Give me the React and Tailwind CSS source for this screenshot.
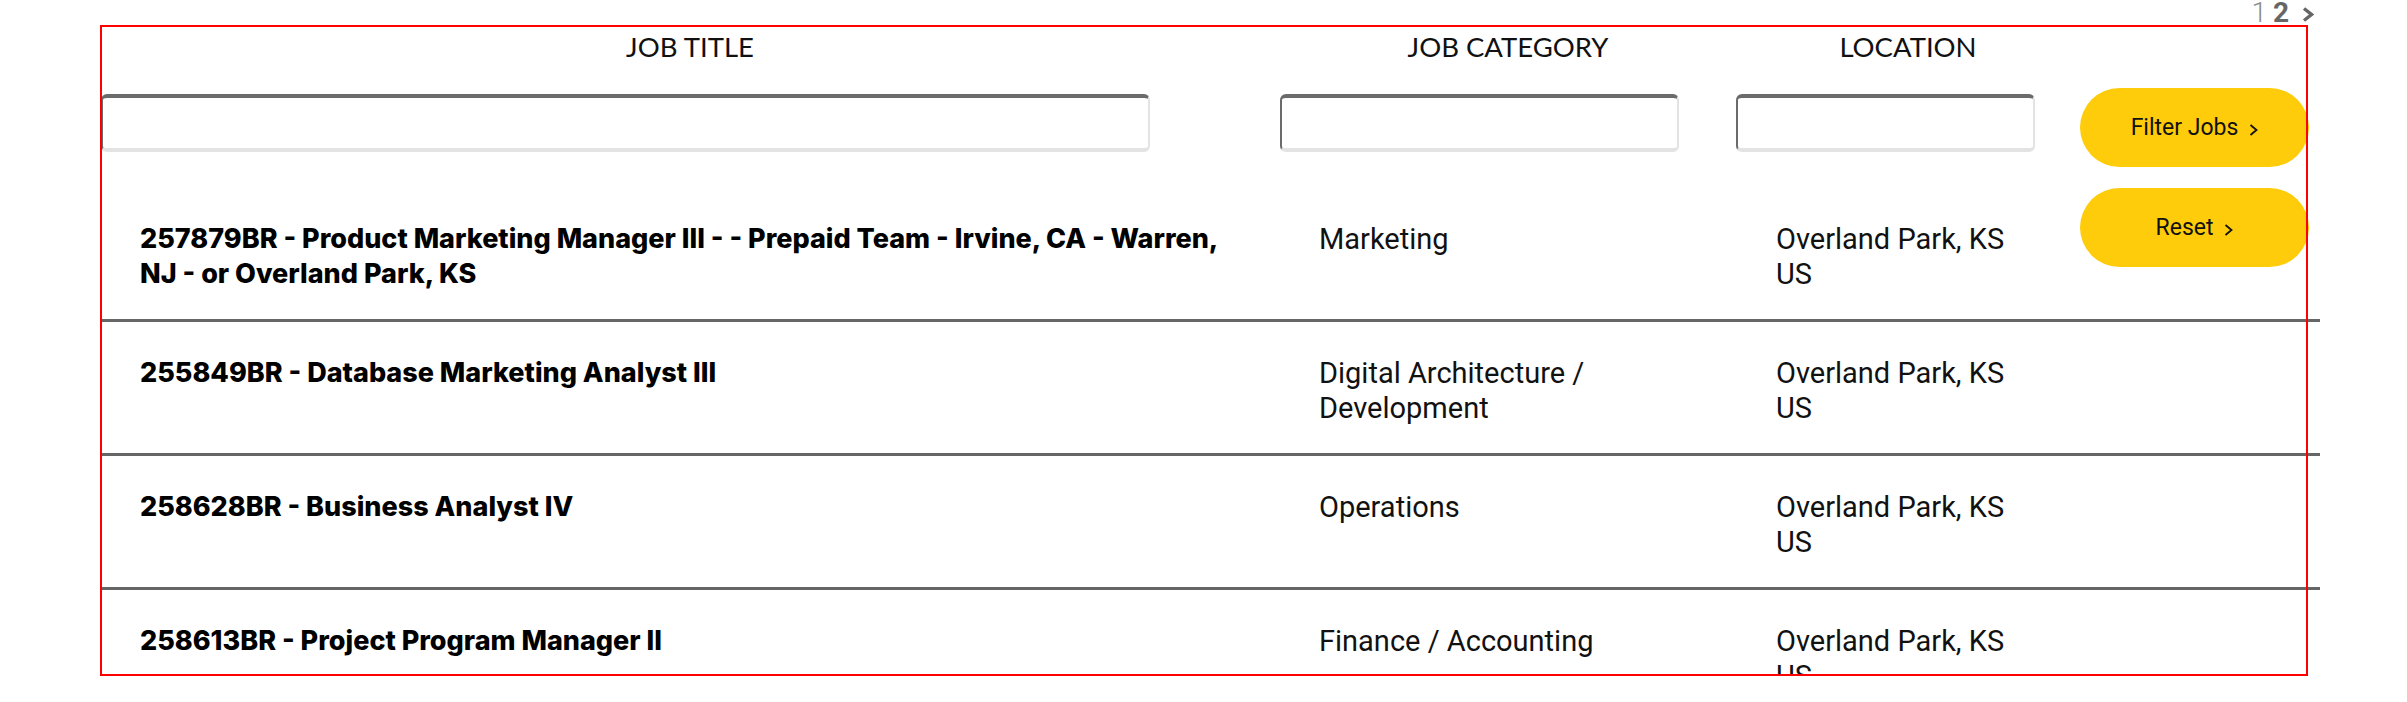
import { Fragment } from "react";

const jobs = [
  {
    title: "257879BR - Product Marketing Manager III - - Prepaid Team - Irvine, CA - Warren, NJ - or Overland Park, KS",
    category: "Marketing",
  },
  { title: "255849BR - Database Marketing Analyst III", category: "Digital Architecture / Development" },
  { title: "258628BR - Business Analyst IV", category: "Operations" },
  { title: "258613BR - Project Program Manager II", category: "Finance / Accounting" },
];

const bold = { fontFamily: "Inter, 'Liberation Sans', sans-serif" };
const regular = { fontFamily: "Roboto, 'Liberation Sans', sans-serif" };
const label = { fontFamily: "Lato, 'Liberation Sans', sans-serif" };

function Chevron({ className = "" }) {
  return (
    <svg width="9" height="12" viewBox="0 0 9 12" className={className} fill="none">
      <polyline points="1.5,1 7.5,6 1.5,11" stroke="#111" strokeWidth="1.8" />
    </svg>
  );
}

function YellowButton({ children }) {
  return (
    <button
      type="button"
      className="flex h-[79px] w-[229px] items-center justify-center gap-[11px] rounded-full bg-[#fecc0a] pt-[2px] text-[23px] text-[#111]"
      style={regular}
    >
      <span>{children}</span>
      <Chevron className="mt-[2px]" />
    </button>
  );
}

function FieldInput({ width }) {
  return (
    <input
      type="text"
      className={[
        "mt-[6px] h-[58px] rounded-[6px] border-t-4 border-r-2 border-b-4 border-l-2 border-t-[#6b6b6b] border-l-[#6b6b6b] border-r-[#e3e3e3] border-b-[#e3e3e3] bg-white outline-none",
        width,
      ].join(" ")}
    />
  );
}

export default function App() {
  return (
    <div className="min-h-[702px] w-[2320px] bg-white pl-[100px]">
      {/* pager */}
      <div className="flex h-[25px] items-start justify-end pr-[6px] text-[28px] leading-[25px] text-[#666]" style={regular}>
        <span className="font-light text-[#8a8a8a]">1</span>
        <span className="ml-[6px] font-bold">2</span>
        <svg width="12" height="15" viewBox="0 0 12 15" className="mt-[7px] ml-[13px]" fill="none">
          <polyline points="2,1.5 9.5,7.5 2,13.5" stroke="#666" strokeWidth="3.4" />
        </svg>
      </div>

      <div className="h-[651px] w-[2208px] overflow-y-clip outline-2 -outline-offset-2 outline-[#ff0000]">
        {/* column labels */}
        <div className="grid grid-cols-[1180px_456px_344px_240px] pt-[5px] text-[27.5px] leading-[34px] text-[#111]" style={label}>
          <div className="text-center">JOB TITLE</div>
          <div className="text-center">JOB CATEGORY</div>
          <div className="text-center">LOCATION</div>
          <div />
        </div>

        {/* filters */}
        <div className="mt-[24px] grid grid-cols-[1180px_456px_344px_240px] items-start">
          <div className="pl-px">
            <FieldInput width="w-[1049px]" />
          </div>
          <FieldInput width="w-[399px]" />
          <FieldInput width="w-[299px]" />
          <YellowButton>Filter Jobs</YellowButton>
        </div>

        {/* results */}
        <div className="mt-[21px]">
          {jobs.map((job, i) => (
            <div
              key={job.title}
              className="grid h-[134px] w-[2220px] grid-cols-[1180px_456px_344px_240px] items-start border-b-[3px] border-[#666]"
            >
              <div className="pt-[33px] pr-[50px] pl-[40px] text-[27px] leading-[35px] font-extrabold text-black" style={bold}>
                {job.title}
              </div>
              <div className="pt-[34px] pr-[40px] pl-[39px] text-[29px] leading-[35px] text-[#111]" style={regular}>
                {job.category}
              </div>
              <div className="pt-[34px] pl-[40px] text-[29px] leading-[35px] text-[#111]" style={regular}>
                <div>Overland Park, KS</div>
                <div>US</div>
              </div>
              <div>{i === 0 ? <YellowButton>Reset</YellowButton> : <Fragment />}</div>
            </div>
          ))}
        </div>
      </div>
    </div>
  );
}
